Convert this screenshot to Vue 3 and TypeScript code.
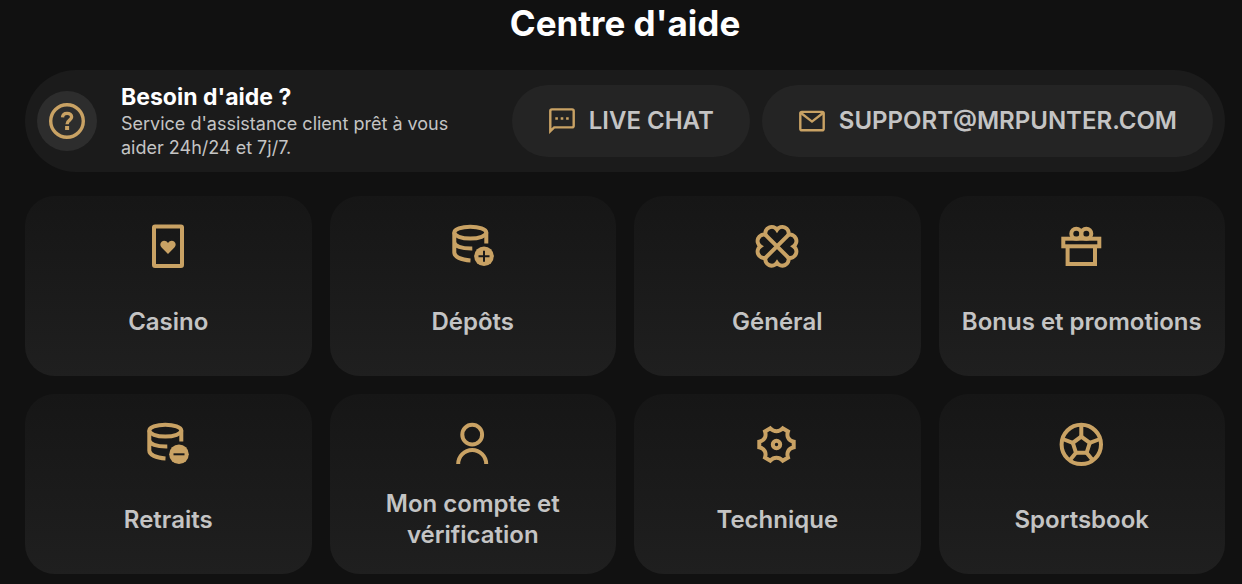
<script setup lang="ts">
type IconName = 'casino' | 'deposit' | 'clover' | 'gift' | 'withdraw' | 'account' | 'gear' | 'ball'

interface Topic {
  label: string
  icon: IconName
}

const topics: Topic[] = [
  { label: 'Casino', icon: 'casino' },
  { label: 'Dépôts', icon: 'deposit' },
  { label: 'Général', icon: 'clover' },
  { label: 'Bonus et promotions', icon: 'gift' },
  { label: 'Retraits', icon: 'withdraw' },
  { label: 'Mon compte et vérification', icon: 'account' },
  { label: 'Technique', icon: 'gear' },
  { label: 'Sportsbook', icon: 'ball' },
]
</script>

<template>
  <main class="help">
    <h1 class="title">Centre d'aide</h1>

    <section class="banner">
      <span class="badge">
        <svg class="badge-icon" viewBox="0 0 36 36" aria-hidden="true">
          <circle cx="18" cy="18" r="16.3" />
          <path d="M13.500 14.400c.2-2.700 2-4 4.600-4s4.500 1.400 4.500 3.700c0 3.200-4.500 3-4.500 7.100" />
          <rect class="solid" x="16.100" y="23" width="4" height="4" />
        </svg>
      </span>
      <div class="intro">
        <h2 class="intro-title">Besoin d'aide ?</h2>
        <p class="intro-text">Service d'assistance client prêt à vous aider 24h/24 et 7j/7.</p>
      </div>
      <div class="contacts">
        <button class="pill" type="button">
          <svg class="pill-icon" viewBox="0 0 28 28" aria-hidden="true">
            <path d="M2.300 24.200V4q0-1.600 1.600-1.600h20.200q1.600 0 1.600 1.600v14.800q0 1.600-1.600 1.600H6.200z" />
            <path class="solid" d="M7.300 10.200h2.600v2.600H7.300zM12.700 10.200h2.600v2.600h-2.600zM18.100 10.200h2.600v2.600h-2.600z" />
          </svg>
          LIVE CHAT
        </button>
        <a class="pill" href="mailto:support@mrpunter.com">
          <svg class="pill-icon" viewBox="0 0 28 28" aria-hidden="true">
            <rect x="2.300" y="4.900" width="23.400" height="18.400" rx="1.600" />
            <path d="M3 6l11 8.600L25 6" />
          </svg>
          SUPPORT@MRPUNTER.COM
        </a>
      </div>
    </section>

    <nav class="grid" aria-label="Rubriques d'aide">
      <a v-for="topic in topics" :key="topic.label" class="card" href="#">
        <svg class="card-icon" viewBox="0 0 48 48" aria-hidden="true">
          <template v-if="topic.icon === 'casino'">
            <rect x="10" y="4.600" width="28" height="39.400" rx="1" />
            <path class="solid" d="M24 32l-6.400-6.400c-1.800-1.900-1.600-4.500 0-5.800 1.900-1.600 4.700-1.300 6.400 1.100 1.700-2.400 4.500-2.700 6.400-1.100 1.600 1.300 1.800 3.900 0 5.800z" />
          </template>

          <template v-else-if="topic.icon === 'deposit' || topic.icon === 'withdraw'">
            <ellipse cx="21.300" cy="10.600" rx="16" ry="5.900" />
            <path d="M5.300 10.400V30.500c0 4.300 6.500 7.300 16.200 7.900M5.300 20c0 4 7 6.700 18 6.500M37.300 10.400V21.500" />
            <circle class="solid" cx="35" cy="34.300" r="9.800" />
            <path v-if="topic.icon === 'deposit'" class="mark" d="M29.500 34.300h11M35 28.800v11" />
            <path v-else class="mark" d="M29.500 34.300h11" />
          </template>

          <template v-else-if="topic.icon === 'clover'">
            <path d="M24 7.700A6.400 6.400 0 0 0 12.500 12.800A6.400 6.400 0 0 0 7.400 24.300A6.400 6.400 0 0 0 12.500 35.800A6.400 6.400 0 0 0 24 40.900A6.400 6.400 0 0 0 35.500 35.800A6.400 6.400 0 0 0 40.600 24.300A6.400 6.400 0 0 0 35.500 12.800A6.400 6.400 0 0 0 24 7.700z" />
            <path d="M12.500 12.800l23 23M35.500 12.800l-23 23" />
          </template>

          <template v-else-if="topic.icon === 'gift'">
            <rect x="5.300" y="16.700" width="36" height="7.600" />
            <path d="M9.600 24.500V42h27.400V24.500" />
            <circle cx="18.300" cy="11.800" r="5" />
            <circle cx="28.300" cy="11.800" r="5" />
          </template>

          <template v-else-if="topic.icon === 'account'">
            <circle cx="23.200" cy="14.700" r="9.900" />
            <path d="M9.200 44a14 14 0 0 1 28 0" />
          </template>

          <template v-else-if="topic.icon === 'gear'">
            <path d="M40.700 21.700V27.300C35.500 28.500 33.300 32.500 35 37.600L29.700 40.700C26 36.900 21 36.900 17.300 40.700L12 37.600C13.700 32.500 11.500 28.500 6.300 27.300V21.700C11.500 20.500 13.700 16.500 12 11.400L17.300 8.300C21 12.100 26 12.100 29.700 8.300L35 11.400C33.300 16.500 35.500 20.500 40.700 21.700z" />
            <circle cx="23.500" cy="24.500" r="3.700" />
          </template>

          <template v-else>
            <circle cx="23.300" cy="24.400" r="19.700" />
            <path d="M23.300 16.600L31.800 22.800L28.600 32.800H18L14.800 22.800z" />
            <path d="M23.300 16.600V5M31.800 22.800L42 19M28.600 32.800L35 40.500M18 32.800L11.600 40.500M14.800 22.800L4.600 19" />
          </template>
        </svg>
        <span class="card-label">{{ topic.label }}</span>
      </a>
    </nav>
  </main>
</template>

<style>
body {
  margin: 0;
  background: #111111;
}
</style>

<style scoped>
.help {
  box-sizing: border-box;
  padding: 0 17px 10px 25px;
  font-family: Inter, 'Liberation Sans', sans-serif;
  color: #c4c4c4;
}

.title {
  margin: 0 0 24px;
  color: #ffffff;
  font-size: 35px;
  font-weight: 700;
  line-height: 46px;
  text-align: center;
}

.banner {
  display: flex;
  align-items: center;
  gap: 24px;
  padding: 12px;
  border-radius: 51px;
  background: #1b1b1b;
}

.badge {
  display: flex;
  flex: none;
  align-items: center;
  justify-content: center;
  width: 60px;
  height: 60px;
  border-radius: 50%;
  background: #2d2d2d;
}

.badge-icon {
  width: 36px;
  height: 36px;
}

.intro {
  flex: 1;
  min-width: 0;
}

.intro-title {
  margin: 0;
  color: #ffffff;
  font-size: 23px;
  font-weight: 700;
  line-height: 30px;
}

.intro-text {
  margin: 0;
  font-size: 18px;
  font-weight: 400;
  line-height: 24px;
}

.contacts {
  display: flex;
  flex: none;
  gap: 12px;
}

.pill {
  display: flex;
  align-items: center;
  gap: 13px;
  box-sizing: border-box;
  height: 72px;
  padding: 0 36px;
  border: 0;
  border-radius: 36px;
  background: #242424;
  color: inherit;
  font-family: inherit;
  font-size: 24px;
  font-weight: 600;
  line-height: 30px;
  text-decoration: none;
  white-space: nowrap;
  cursor: pointer;
}

.pill-icon {
  flex: none;
  width: 28px;
  height: 28px;
}

.grid {
  display: grid;
  grid-template-columns: repeat(4, minmax(0, 1fr));
  gap: 18px;
  margin-top: 24px;
}

.card {
  display: flex;
  flex-direction: column;
  align-items: center;
  gap: 20px;
  padding: 26px 20px 24px;
  border-radius: 30px;
  background: linear-gradient(#161616, #1f1f1f);
  color: inherit;
  text-decoration: none;
}

.card-icon {
  width: 48px;
  height: 48px;
}

.card-label {
  display: flex;
  align-items: center;
  min-height: 62px;
  font-size: 24px;
  font-weight: 600;
  line-height: 31px;
  text-align: center;
}

svg {
  fill: none;
  stroke: #c9a264;
  stroke-width: 4;
}

.badge-icon {
  stroke-width: 3.4;
}

.pill-icon {
  stroke-width: 2.4;
}

.solid {
  fill: #c9a264;
  stroke: none;
}

.mark {
  stroke: #1a1a1a;
  stroke-width: 2;
}
</style>
